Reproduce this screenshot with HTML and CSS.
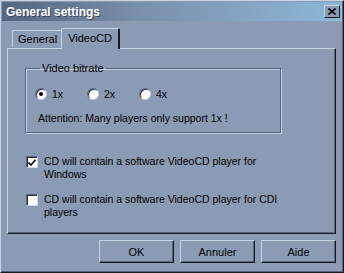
FILE: index.html
```html
<!DOCTYPE html>
<html lang="en">
<head>
  <meta charset="UTF-8" />
  <title>General settings</title>
  <link rel="stylesheet" href="styles.css">
</head>
<body>

  <div class="window">
    <!-- TITLE BAR -->
    <div class="titlebar">
      <span class="title">General settings</span>
      <button class="close-btn">
        <svg width="8" height="7" viewBox="0 0 8 7">
          <path d="M0.5 0.5 L7.5 6.5 M7.5 0.5 L0.5 6.5" stroke="#000" stroke-width="1.6" fill="none"/>
        </svg>
      </button>
    </div>

    <div class="content">
      <!-- TABS -->
      <div class="tabs">
        <div class="tab">General</div>
        <div class="tab active">VideoCD</div>
      </div>

      <div class="panel">
        <fieldset class="group">
          <legend>Video bitrate</legend>
          <div class="radios">
            <label class="radio checked"><span class="dot"></span>1x</label>
            <label class="radio"><span class="dot"></span>2x</label>
            <label class="radio"><span class="dot"></span>4x</label>
          </div>
          <p class="note">Attention: Many players only support 1x !</p>
        </fieldset>

        <label class="check">
          <span class="box">
            <svg width="8" height="7" viewBox="0 0 8 7">
              <path d="M0.5 3.5 L3 6 L7.5 0.8" stroke="#000" stroke-width="1.6" fill="none"/>
            </svg>
          </span>
          <span>CD will contain a software VideoCD player for Windows</span>
        </label>

        <label class="check">
          <span class="box"></span>
          <span>CD will contain a software VideoCD player for CDI players</span>
        </label>
      </div>

      <!-- BUTTONS -->
      <div class="buttons">
        <button class="btn">OK</button>
        <button class="btn">Annuler</button>
        <button class="btn">Aide</button>
      </div>
    </div>
  </div>

</body>
</html>
```

FILE: styles.css
```css
* {
  margin: 0; padding: 0;
  box-sizing: border-box;
  font-family: 'Liberation Sans', Arial, sans-serif;
}

body {
  background: #8b9bb4;
  color: #000;
  font-size: 10.5px;
}

.window {
  width: 344px;
  height: 273px;
  background: #8b9bb4;
  border: 1px solid;
  border-color: #c8d3e3 #141a24 #141a24 #c8d3e3;
  padding: 1px 1px 1px 1px;
  box-shadow: inset -1px -1px 0 #56647b;
  display: flex;
  flex-direction: column;
}

.titlebar {
  height: 19px;
  background: linear-gradient(to right, #55667e, #7a8fab 40%, #8db8d7);
  display: flex;
  align-items: center;
  justify-content: space-between;
  padding: 0 2px 0 4px;
}

.title {
  color: #fff;
  font-weight: bold;
  font-size: 12px;
  text-shadow: 1px 1px 0 #3d4a5d;
}

.close-btn {
  width: 16px;
  height: 13px;
  background: #8b9bb4;
  border: 1px solid;
  border-color: #c8d3e3 #141a24 #141a24 #c8d3e3;
  display: flex;
  align-items: center;
  justify-content: center;
}

.content {
  flex: 1;
  padding: 6px 6px 0 5px;
  display: flex;
  flex-direction: column;
}

.tabs {
  display: flex;
  align-items: flex-end;
  height: 21px;
  padding-left: 5px;
  position: relative;
  z-index: 1;
  font-size: 11px;
}

.tab {
  height: 17px;
  padding: 2px 4px 0 5px;
  border: 1px solid;
  border-bottom: none;
  border-color: #c8d3e3 #56647b #c8d3e3 #c8d3e3;
  border-radius: 2px 2px 0 0;
  background: #8b9bb4;
  margin-bottom: 1px;
}

.tab.active {
  height: 21px;
  margin-bottom: -1px;
  padding: 3px 6px 0 6px;
  border-right: 2px solid #141a24;
  margin-left: -1px;
}

.panel {
  height: 186px;
  border: 1px solid;
  border-color: #c8d3e3 #141a24 #141a24 #c8d3e3;
  box-shadow: inset -1px -1px 0 #56647b;
  padding: 13px 17px 0 17px;
}

.group {
  width: 256px;
  height: 71px;
  border: 1px solid #56647b;
  box-shadow: inset 1px 1px 0 #c8d3e3, 1px 1px 0 #c8d3e3;
  padding: 12px 0 0 9px;
}

.group legend {
  padding: 0 2px;
  margin-left: 5px;
  font-size: 11px;
}

.radios {
  display: flex;
  height: 16px;
  align-items: center;
}

.radio {
  display: flex;
  align-items: center;
  gap: 5px;
  width: 52px;
}

.dot {
  width: 12px;
  height: 12px;
  border-radius: 50%;
  background: #fff;
  border: 1px solid;
  border-color: #56647b #c8d3e3 #c8d3e3 #56647b;
  box-shadow: inset 1px 1px 0 #2a3140;
  display: flex;
  align-items: center;
  justify-content: center;
}

.radio.checked .dot::after {
  content: '';
  width: 4px;
  height: 4px;
  border-radius: 50%;
  background: #000;
}

.note {
  margin-top: 10px;
  padding-left: 3px;
}

.check {
  display: flex;
  align-items: flex-start;
  gap: 6px;
  width: 258px;
  line-height: 13px;
  margin-left: 1px;
  margin-top: 22px;
}

.check + .check {
  margin-top: 12px;
}

.box {
  flex: none;
  width: 12px;
  height: 12px;
  margin-top: 1px;
  background: #fff;
  border: 1px solid;
  border-color: #56647b #c8d3e3 #c8d3e3 #56647b;
  box-shadow: inset 1px 1px 0 #2a3140;
  display: flex;
  align-items: center;
  justify-content: center;
}

.buttons {
  display: flex;
  justify-content: flex-end;
  gap: 6px;
  margin-top: 6px;
}

.btn {
  width: 75px;
  height: 23px;
  background: #8b9bb4;
  font-size: 11px;
  border: 1px solid;
  border-color: #c8d3e3 #141a24 #141a24 #c8d3e3;
  box-shadow: inset -1px -1px 0 #56647b;
}
```
